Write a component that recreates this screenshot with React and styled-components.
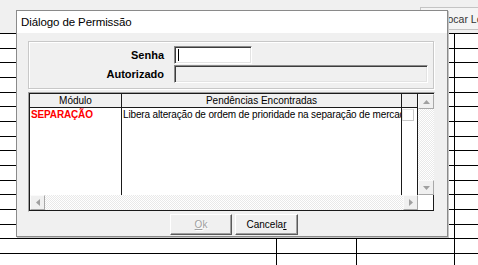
import React from "react";
import styled, { createGlobalStyle } from "styled-components";

const Global = createGlobalStyle`
  html, body { margin: 0; padding: 0; }
  body {
    width: 478px; height: 265px; overflow: hidden; background: #f0f0f0;
    font-family: "Liberation Sans", Arial, sans-serif;
  }
  #root { width: 478px; height: 265px; }
`;

const Page = styled.div`
  position: relative;
  width: 478px;
  height: 265px;
  overflow: hidden;
  display: flex;
  flex-direction: column;
  background: #f0f0f0;
`;

const Toolbar = styled.div`
  height: 33px;
  flex: none;
  box-sizing: border-box;
  display: flex;
  align-items: flex-start;
  padding: 7px 0 0 420px;
`;

const ToolButton = styled.div`
  flex: none;
  width: 92px;
  height: 23px;
  box-sizing: border-box;
  border: 1px solid #c4c4c4;
  background: #f4f4f4;
  color: #333;
  font-size: 10.5px;
  display: flex;
  align-items: center;
  padding-left: 17px;
  white-space: nowrap;
`;

const Sheet = styled.div`
  flex: 1;
  display: grid;
  grid-template-columns: 277px 80px 98px 1fr;
  grid-auto-rows: 14.667px;
  border-top: 1px solid #000;
  background: #fff;
`;

const SheetCell = styled.div`
  box-sizing: border-box;
  border-bottom: 1px solid #000;
  border-right: ${(p) => (p.$last ? "none" : "1px solid #000")};
`;

const Dialog = styled.div`
  position: absolute;
  left: 16px;
  top: 10px;
  width: 432px;
  height: 227px;
  box-sizing: border-box;
  border: 1px solid #8a8a8a;
  box-shadow: 1px 1px 0 #c4c4c4;
  background: #f0f0f0;
  display: flex;
  flex-direction: column;
`;

const TitleBar = styled.div`
  height: 22px;
  flex: none;
  background: #fff;
  display: flex;
  align-items: center;
  padding-left: 4px;
  font-size: 11.5px;
  letter-spacing: -0.1px;
  color: #000;
`;

const Body = styled.div`
  flex: 1;
  display: flex;
  flex-direction: column;
  padding: 8px 12px 0 11px;
`;

const GroupBox = styled.div`
  height: 48px;
  width: 406px;
  box-sizing: border-box;
  border: 1px solid #c8c8c8;
  box-shadow: inset 1px 1px 0 #fff, 1px 1px 0 #fff;
  display: grid;
  grid-template-columns: 135px auto;
  grid-auto-rows: 18px;
  column-gap: 10px;
  row-gap: 1px;
  align-content: start;
  padding-top: 4px;
`;

const Label = styled.div`
  font-size: 11px;
  font-weight: bold;
  color: #000;
  text-align: right;
  align-self: center;
`;

const Field = styled.div`
  width: ${(p) => p.$w}px;
  height: 18px;
  box-sizing: border-box;
  border: 1px solid;
  border-color: #8a8a8a #fff #fff #8a8a8a;
  box-shadow: inset 1px 1px 0 #3c3c3c, inset -1px -1px 0 #e3e3e3;
  background: ${(p) => (p.$disabled ? "#f0f0f0" : "#fff")};
  display: flex;
  align-items: center;
  padding-left: 3px;
`;

const Caret = styled.span`
  width: 1px;
  height: 12px;
  background: #000;
`;

const GridFrame = styled.div`
  margin-top: 3px;
  width: 407px;
  height: 120px;
  box-sizing: border-box;
  border: 1px solid;
  border-color: #a0a0a0 #f0f0f0 #f0f0f0 #a0a0a0;
`;

const GridInner = styled.div`
  height: 100%;
  box-sizing: border-box;
  border: 1px solid #1a1a1a;
  background: #fff;
  display: flex;
  flex-direction: column;
`;

const GridTop = styled.div`
  height: 102px;
  display: flex;
`;

const Column = styled.div`
  width: ${(p) => p.$w}px;
  flex: none;
  box-sizing: border-box;
  border-right: 1px solid #1a1a1a;
  display: flex;
  flex-direction: column;
  overflow: hidden;
`;

const HeadCell = styled.div`
  height: 14px;
  box-sizing: border-box;
  border-bottom: 1px solid #1a1a1a;
  background: #f0f0f0;
  font-size: 10px;
  color: #000;
  text-align: center;
  line-height: 13px;
  white-space: nowrap;
`;

const DataCell = styled.div`
  height: 13px;
  line-height: 13px;
  padding-left: ${(p) => (p.$pad ? 1 : 0)}px;
  font-size: 10px;
  letter-spacing: -0.15px;
  white-space: nowrap;
  overflow: hidden;
  color: ${(p) => p.$color || "#000"};
  font-weight: ${(p) => (p.$bold ? "bold" : "normal")};
`;

const MiniBox = styled.div`
  width: 12px;
  height: 12px;
  box-sizing: border-box;
  border: 1px solid #c8c8c8;
  border-top-color: #e6e6e6;
  border-left-color: #e6e6e6;
  margin-top: 1px;
`;

const VScroll = styled.div`
  width: 16px;
  flex: none;
  display: flex;
  flex-direction: column;
`;

const Track = styled.div`
  flex: 1;
  background: repeating-conic-gradient(#ffffff 0% 25%, #e9e9e9 0% 50%) 0 0 / 2px 2px;
`;

const ScrollBtn = styled.div`
  width: ${(p) => p.$w || 16}px;
  height: ${(p) => p.$h || 15}px;
  flex: none;
  box-sizing: border-box;
  border: 1px solid;
  border-color: #fafafa #a8a8a8 #a8a8a8 #fafafa;
  background: #f0f0f0;
  display: flex;
  align-items: center;
  justify-content: center;
`;

const HRow = styled.div`
  height: 15px;
  display: flex;
`;

const HScroll = styled.div`
  width: 388px;
  flex: none;
  display: flex;
`;

const Corner = styled.div`
  flex: 1;
  background: #fff;
`;

const ButtonRow = styled.div`
  margin-top: 2px;
  display: flex;
  justify-content: center;
  gap: 3px;
  padding-left: 5px;
`;

const Button = styled.div`
  width: ${(p) => p.$w}px;
  height: 21px;
  box-sizing: border-box;
  border: 1px solid;
  border-color: #fff #5a5a5a #5a5a5a #fff;
  box-shadow: inset -1px -1px 0 #a0a0a0;
  background: #f0f0f0;
  font-size: 10px;
  color: ${(p) => (p.$disabled ? "#a0a0a0" : "#000")};
  text-shadow: ${(p) => (p.$disabled ? "1px 1px 0 #fff" : "none")};
  display: flex;
  align-items: center;
  justify-content: center;
  padding-bottom: 1px;
`;

const Key = styled.span`
  text-decoration: underline;
`;

const Arrow = ({ dir }) => {
  const pts = {
    up: "0,4 3.5,0 7,4",
    down: "0,0 3.5,4 7,0",
    left: "4,0 0,3.5 4,7",
    right: "0,0 4,3.5 0,7",
  }[dir];
  const vertical = dir === "up" || dir === "down";
  return (
    <svg width={vertical ? 7 : 4} height={vertical ? 4 : 7} viewBox={vertical ? "0 0 7 4" : "0 0 4 7"}>
      <polygon points={pts} fill="#a0a0a0" />
    </svg>
  );
};

const sheetCols = 4;
const sheetRows = 16;

export default function App() {
  return (
    <Page>
      <Global />
      <Toolbar>
        <ToolButton>Trocar Lote</ToolButton>
      </Toolbar>
      <Sheet>
        {Array.from({ length: sheetRows * sheetCols }).map((_, i) => (
          <SheetCell key={i} $last={i % sheetCols === sheetCols - 1} />
        ))}
      </Sheet>

      <Dialog>
        <TitleBar>Diálogo de Permissão</TitleBar>
        <Body>
          <GroupBox>
            <Label>Senha</Label>
            <Field $w={78}>
              <Caret />
            </Field>
            <Label>Autorizado</Label>
            <Field $w={254} $disabled />
          </GroupBox>

          <GridFrame>
            <GridInner>
              <GridTop>
                <Column $w={92}>
                  <HeadCell>Módulo</HeadCell>
                  <DataCell $pad $bold $color="#ff0000">SEPARAÇÃO</DataCell>
                </Column>
                <Column $w={280}>
                  <HeadCell>Pendências Encontradas</HeadCell>
                  <DataCell $pad>Libera alteração de ordem de prioridade na separação de mercadorias</DataCell>
                </Column>
                <Column $w={16}>
                  <HeadCell />
                  <MiniBox />
                </Column>
                <VScroll>
                  <ScrollBtn>
                    <Arrow dir="up" />
                  </ScrollBtn>
                  <Track />
                  <ScrollBtn>
                    <Arrow dir="down" />
                  </ScrollBtn>
                </VScroll>
              </GridTop>
              <HRow>
                <HScroll>
                  <ScrollBtn $w={15}>
                    <Arrow dir="left" />
                  </ScrollBtn>
                  <Track />
                  <ScrollBtn $w={15}>
                    <Arrow dir="right" />
                  </ScrollBtn>
                </HScroll>
                <Corner />
              </HRow>
            </GridInner>
          </GridFrame>

          <ButtonRow>
            <Button $w={62} $disabled>
              <span>
                <Key>O</Key>k
              </span>
            </Button>
            <Button $w={63}>
              <span>
                Cancela<Key>r</Key>
              </span>
            </Button>
          </ButtonRow>
        </Body>
      </Dialog>
    </Page>
  );
}
